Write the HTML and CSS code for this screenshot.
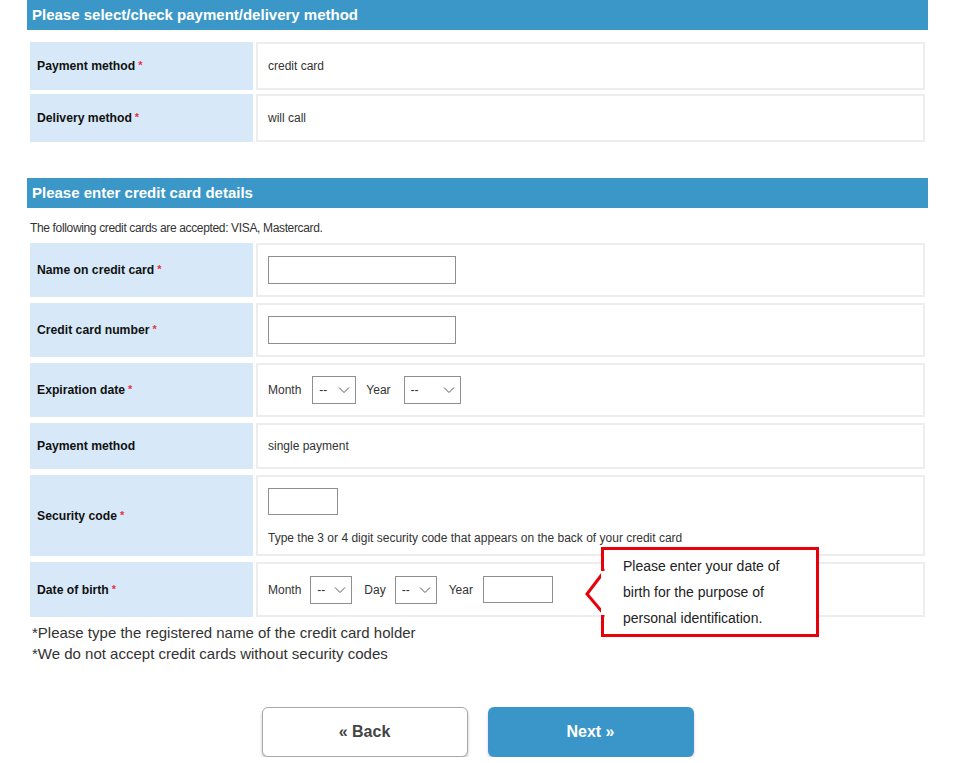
FILE: index.html
```html
<!DOCTYPE html>
<html lang="en">
<head>
<meta charset="utf-8">
<title>Payment</title>
<link rel="stylesheet" href="styles.css">
</head>
<body>
<div class="page">
  <div class="bar">Please select/check payment/delivery method</div>
  <div class="rows rows-top">
    <div class="row h48">
      <div class="label">Payment method <span class="req">*</span></div>
      <div class="value">credit card</div>
    </div>
    <div class="row h48">
      <div class="label">Delivery method <span class="req">*</span></div>
      <div class="value">will call</div>
    </div>
  </div>

  <div class="bar bar2">Please enter credit card details</div>
  <p class="caption">The following credit cards are accepted: VISA, Mastercard.</p>
  <div class="rows">
    <div class="row h54">
      <div class="label">Name on credit card <span class="req">*</span></div>
      <div class="value"><input class="text wide" type="text"></div>
    </div>
    <div class="row h54">
      <div class="label">Credit card number <span class="req">*</span></div>
      <div class="value"><input class="text wide" type="text"></div>
    </div>
    <div class="row h54">
      <div class="label">Expiration date <span class="req">*</span></div>
      <div class="value">
        <span class="lbl m11">Month</span>
        <span class="sel s44"><select><option>--</option></select><svg class="chev" viewBox="0 0 12 8"><path d="M1 1.5 L6 6.5 L11 1.5" fill="none" stroke="#555" stroke-width="1"/></svg></span>
        <span class="lbl m13">Year</span>
        <span class="sel s57"><select><option>--</option></select><svg class="chev" viewBox="0 0 12 8"><path d="M1 1.5 L6 6.5 L11 1.5" fill="none" stroke="#555" stroke-width="1"/></svg></span>
      </div>
    </div>
    <div class="row h46">
      <div class="label">Payment method</div>
      <div class="value">single payment</div>
    </div>
    <div class="row h81">
      <div class="label">Security code <span class="req">*</span></div>
      <div class="value col">
        <input class="text small" type="text">
        <span class="hint">Type the 3 or 4 digit security code that appears on the back of your credit card</span>
      </div>
    </div>
    <div class="row h55">
      <div class="label">Date of birth <span class="req">*</span></div>
      <div class="value tipwrap">
        <span class="lbl">Month</span>
        <span class="sel s42 gap12"><select><option>--</option></select><svg class="chev" viewBox="0 0 12 8"><path d="M1 1.5 L6 6.5 L11 1.5" fill="none" stroke="#555" stroke-width="1"/></svg></span>
        <span class="lbl">Day</span>
        <span class="sel s42 gap12"><select><option>--</option></select><svg class="chev" viewBox="0 0 12 8"><path d="M1 1.5 L6 6.5 L11 1.5" fill="none" stroke="#555" stroke-width="1"/></svg></span>
        <span class="lbl m10">Year</span>
        <input class="text small" type="text">
        <div class="tooltip">
          <svg class="tip-arrow" viewBox="0 0 18 44"><polygon points="17,2 1,23 17,42" fill="#fff" stroke="#e8000b" stroke-width="3" stroke-linejoin="miter"/><rect x="15" y="0" width="4" height="44" fill="#fff"/></svg>
          <p>Please enter your date of birth for the purpose of personal identification.</p>
        </div>
      </div>
    </div>
  </div>

  <div class="notes">
    <p>*Please type the registered name of the credit card holder</p>
    <p>*We do not accept credit cards without security codes</p>
  </div>

  <div class="actions">
    <button class="btn back" type="button">&laquo; Back</button>
    <button class="btn next" type="button">Next &raquo;</button>
  </div>
</div>
</body>
</html>
```
FILE: styles.css
```css
* { box-sizing: border-box; }
body {
  margin: 0;
  background: #fff;
  font-family: "Liberation Sans", Arial, sans-serif;
  color: #222;
}
.page {
  margin-left: 27px;
  width: 901px;
}
.bar {
  height: 30px;
  line-height: 30px;
  background: #3a97c8;
  color: #fff;
  font-weight: bold;
  font-size: 15px;
  padding-left: 5px;
}
.bar2 { margin-top: 36px; }
.rows {
  display: flex;
  flex-direction: column;
  gap: 6px;
  padding: 0 3px;
}
.rows-top {
  margin-top: 12px;
  gap: 4px;
}
.row {
  display: grid;
  grid-template-columns: 223px 1fr;
  column-gap: 3px;
}
.h48 { height: 48px; }
.h54 { height: 54px; }
.h46 { height: 46px; }
.h81 { height: 81px; }
.h55 { height: 55px; }
.label {
  background: #d7e9f8;
  display: flex;
  align-items: center;
  padding-left: 7px;
  font-size: 12.2px;
  font-weight: bold;
  color: #111;
}
.req {
  color: #e8333f;
  font-weight: bold;
  margin-left: 3px;
  font-size: 11px;
  position: relative;
  top: -1px;
}
.value {
  border: 2px solid #ededed;
  display: flex;
  align-items: center;
  padding-left: 10px;
  font-size: 12px;
  color: #333;
}
.value.col {
  flex-direction: column;
  align-items: flex-start;
  justify-content: flex-start;
  padding-top: 11px;
}
.hint {
  margin-top: 16px;
  color: #333;
}
.caption {
  margin: 0;
  padding: 12px 0 7px 3px;
  font-size: 12px;
  line-height: 16px;
  color: #333;
  letter-spacing: -0.35px;
}
.text {
  height: 28px;
  border: 1px solid #8f8f8f;
  background: #fff;
  font-size: 12px;
  padding: 0 4px;
}
.text.wide { width: 188px; }
.text.small { width: 70px; height: 27px; }
.lbl {
  font-size: 12px;
  color: #333;
  margin-right: 9px;
}
.lbl.m10 { margin-right: 10px; }
.lbl.m11 { margin-right: 11px; }
.lbl.m13 { margin-right: 13px; }
.sel {
  position: relative;
  display: inline-block;
  height: 28px;
  margin-right: 10px;
}
.sel.gap12 { margin-right: 12px; }
.sel select {
  appearance: none;
  -webkit-appearance: none;
  width: 100%;
  height: 28px;
  border: 1px solid #8f8f8f;
  background: #fff;
  font-family: "Liberation Sans", Arial, sans-serif;
  font-size: 12px;
  color: #333;
  padding: 0 0 0 6px;
  border-radius: 0;
}
.s44 { width: 44px; }
.s42 { width: 42px; }
.s57 { width: 57px; }
.chev {
  position: absolute;
  right: 6px;
  top: 10px;
  width: 12px;
  height: 8px;
  pointer-events: none;
}
.tipwrap { position: relative; }
.tooltip {
  position: absolute;
  left: 343px;
  top: -17px;
  width: 218px;
  height: 90px;
  border: 3px solid #e8000b;
  background: #fff;
  padding: 3px 35px 0 19px;
}
.tooltip p {
  margin: 0;
  font-size: 14px;
  line-height: 26px;
  color: #222;
}
.tip-arrow {
  position: absolute;
  left: -18px;
  top: 21px;
  width: 18px;
  height: 44px;
  overflow: visible;
}
.notes {
  margin-top: 5px;
  padding-left: 5px;
  font-size: 15px;
  line-height: 21px;
  color: #333;
}
.notes p { margin: 0; }
.actions {
  margin-top: 43px;
  display: flex;
  justify-content: center;
  gap: 20px;
}
.btn {
  width: 206px;
  height: 50px;
  border-radius: 6px;
  font-family: "Liberation Sans", Arial, sans-serif;
  font-weight: bold;
  font-size: 16px;
  cursor: pointer;
}
.btn.back {
  background: #fff;
  border: 1px solid #a9a9a9;
  color: #444;
  box-shadow: 0 2px 3px rgba(0,0,0,0.25);
}
.btn.next {
  background: #3a96c8;
  border: none;
  color: #fff;
  box-shadow: 0 2px 3px rgba(150,60,200,0.3);
}
```
